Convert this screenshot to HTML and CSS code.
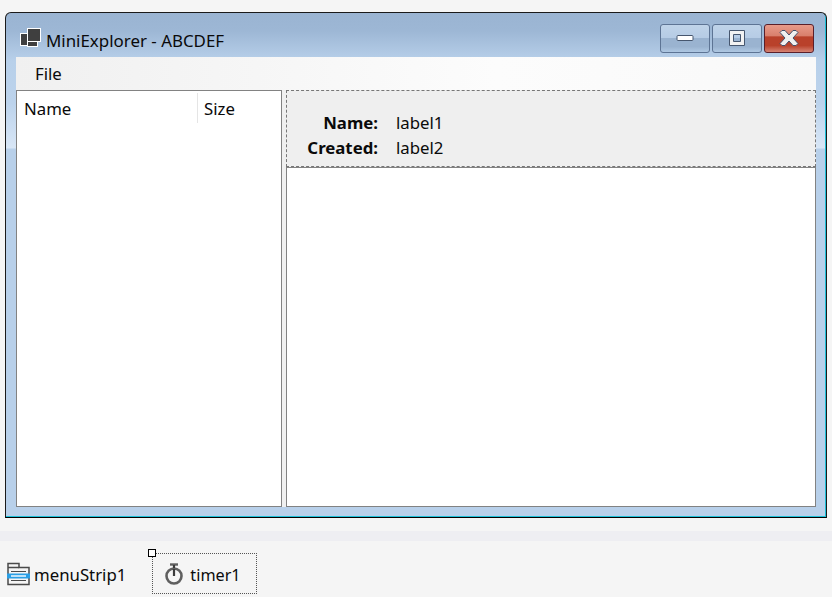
FILE: index.html
```html
<!DOCTYPE html>
<html lang="en">
<head>
    <meta charset="UTF-8">
    <title>MiniExplorer - ABCDEF</title>
    <link rel="stylesheet" href="styles.css">
</head>
<body>
    <div class="window">
        <div class="titlebar">
            <svg class="app-icon" width="22" height="20" viewBox="0 0 22 20">
                <rect x="8" y="0" width="14" height="14" fill="#fff"/>
                <rect x="1" y="5" width="8" height="13" fill="#fff"/>
                <rect x="8" y="13" width="11" height="6" fill="#fff"/>
                <rect x="9" y="1" width="12" height="12" fill="#3f3f3f"/>
                <rect x="2" y="6" width="6" height="11" fill="#3f3f3f"/>
                <rect x="9" y="14" width="9" height="4" fill="#3f3f3f"/>
            </svg>
            <span class="title">MiniExplorer - ABCDEF</span>
            <div class="buttons">
                <div class="winbtn">
                    <svg width="18" height="8" viewBox="0 0 18 8"><rect x="1" y="1.5" width="16" height="5" rx="1" fill="#fff" stroke="#46566e"/></svg>
                </div>
                <div class="winbtn">
                    <svg width="18" height="16" viewBox="0 0 18 16"><path fill-rule="evenodd" d="M1.5 .5h15v15h-15zM5.5 4.5v7h7v-7z" fill="#f2f2f2" stroke="#46566e"/></svg>
                </div>
                <div class="winbtn close">
                    <svg width="20" height="16" viewBox="0 0 20 16"><path d="M1 2.5 3 .5h3L10 5 14 .5h3L19 2.5 14 8l5 5.5-2 2h-3L10 11l-4 4.5H3l-2-2L6 8z" fill="#f0f0f0" stroke="#46506a"/></svg>
                </div>
            </div>
        </div>
        <div class="client">
            <div class="menu"><span class="menu-item">File</span></div>
            <div class="split">
                <div class="listview">
                    <div class="col col-name">Name</div>
                    <div class="col col-size">Size</div>
                </div>
                <div class="detail">
                    <div class="info">
                        <div class="info-row"><span class="info-key">Name:</span><span>label1</span></div>
                        <div class="info-row"><span class="info-key">Created:</span><span>label2</span></div>
                    </div>
                    <div class="content"></div>
                </div>
            </div>
        </div>
    </div>

    <div class="band"></div>

    <div class="tray">
        <div class="tray-item strip">
            <svg width="24" height="24" viewBox="0 0 24 24">
                <path d="M2 1.5h11v4h10v17H2z" fill="#f5f5f5" stroke="#4a4a4a" stroke-width="1.5"/>
                <path d="M2 5.5h11" stroke="#4a4a4a" stroke-width="1.5"/>
                <path d="M1 14h23" stroke="#2a9fe6" stroke-width="5"/>
                <path d="M5 9.5h15M5 18.5h15" stroke="#4a4a4a" stroke-width="1.2"/>
                <path d="M5 14h15" stroke="#fff" stroke-width="1.4"/>
            </svg>
            <span class="tray-label">menuStrip1</span>
        </div>
        <div class="tray-item timer">
            <span class="handle"></span>
            <svg width="20" height="24" viewBox="0 0 20 24">
                <circle cx="9" cy="14" r="7.5" fill="none" stroke="#5f5f5f" stroke-width="2.6"/>
                <path d="M5 2.5h8" stroke="#5f5f5f" stroke-width="2.4"/>
                <path d="M9 3v3M9 7v7" stroke="#3a3a3a" stroke-width="2.2"/>
            </svg>
            <span class="tray-label timer-label">timer1</span>
        </div>
    </div>
</body>
</html>
```

FILE: styles.css
```css
html, body {
    margin: 0;
    padding: 0;
}
body {
    width: 832px;
    height: 597px;
    overflow: hidden;
    background-color: #f5f5f5;
    font-family: "Noto Sans", sans-serif;
    font-size: 16.8px;
    color: #0a0a0a;
}
.window {
    width: 800px;
    height: 494px;
    margin: 12px 0 0 5px;
    background: linear-gradient(#9ab4d2 0, #9db7d5 18px, #b8d0ea 48px, #bcd3ec 90px, #d8e6f6 135px, #b8d0ea 136px, #b8d0ea 100%);
    border: 1px solid #1a1a1a;
    border-bottom-color: #000;
    border-radius: 6px 6px 0 0;
    box-shadow: inset -1px -1px 0 #1cc0d8;
    display: flex;
    flex-direction: column;
    padding: 0 10px 10px;
}
.titlebar {
    height: 44px;
    display: flex;
    align-items: center;
}
.app-icon {
    margin: 6px 5px 0 3px;
}
.title {
    margin-top: 10px;
    flex: 1;
    font-size: 16.9px;
}
.buttons {
    display: flex;
    gap: 2px;
    margin: 6px 2px 0 0;
}
.winbtn {
    width: 48px;
    height: 27px;
    border: 1px solid #5d7494;
    border-radius: 3px;
    background: linear-gradient(#bfd3e9 0, #b6cce5 48%, #9ab3d0 50%, #9ab3d0 80%, #afc8e3 100%);
    display: flex;
    align-items: center;
    justify-content: center;
}
.close {
    border-color: #5a1f2a;
    background: linear-gradient(#e89a8a 0, #d97f6c 40%, #b9412b 44%, #b9412b 76%, #d68474 100%);
}
.client {
    flex: 1;
    display: flex;
    flex-direction: column;
    background-color: #f0f0f0;
}
.menu {
    height: 33px;
    background: linear-gradient(to right, #f0f0f0, #fcfcfc 60%, #f9f9f9);
    display: flex;
    align-items: center;
}
.menu-item {
    margin-left: 19px;
}
.split {
    flex: 1;
    display: flex;
    gap: 4px;
}
.listview {
    width: 264px;
    background-color: #fff;
    border: 1px solid #828282;
    display: flex;
    align-items: flex-start;
}
.col {
    height: 30px;
    line-height: 32px;
    padding-left: 7px;
    margin-top: 2px;
    box-sizing: border-box;
}
.col-name {
    width: 181px;
    border-right: 1px solid #e5e5e5;
}
.col-size {
    padding-left: 6px;
}
.detail {
    flex: 1;
    display: flex;
    flex-direction: column;
}
.info {
    height: 77px;
    box-sizing: border-box;
    background-color: #efefef;
    border: 1px dashed #777;
    padding-top: 19px;
}
.info-row {
    display: flex;
    gap: 18px;
    height: 25px;
    line-height: 25px;
}
.info-key {
    width: 91px;
    text-align: right;
    font-weight: 700;
}
.content {
    flex: 1;
    background-color: #fff;
    border: 1px solid #828282;
}
.band {
    height: 10px;
    margin-top: 13px;
    background-color: #eeeef2;
}
.tray {
    display: flex;
    align-items: center;
    gap: 26px;
    padding: 12px 0 0 6px;
}
.tray-item {
    display: flex;
    align-items: center;
    gap: 4px;
}
.tray-label {
    margin-top: 2px;
}
.timer {
    position: relative;
    width: 105px;
    height: 41px;
    box-sizing: border-box;
    border: 1px dotted #555;
    padding-left: 12px;
    gap: 5px;
}
.timer-label {
    font-size: 16.2px;
}
.handle {
    position: absolute;
    left: -5px;
    top: -5px;
    width: 6px;
    height: 6px;
    background-color: #fff;
    border: 1px solid #000;
}
```
